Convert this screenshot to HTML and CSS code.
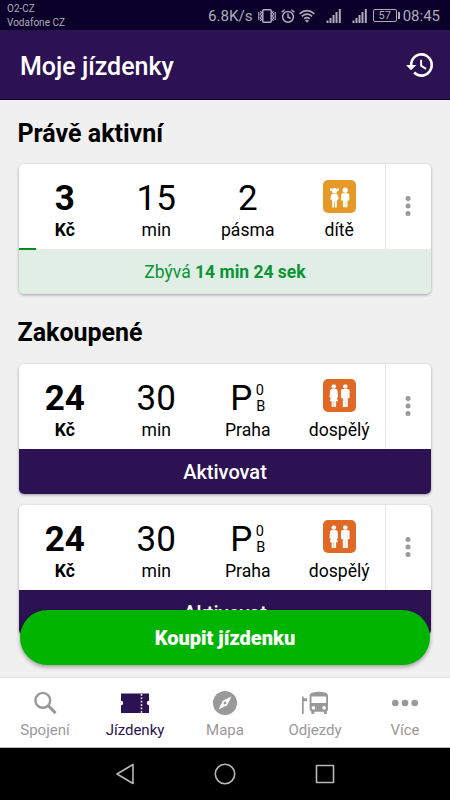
FILE: index.html
```html
<!DOCTYPE html>
<html lang="cs">
<head>
<meta charset="utf-8">
<title>Moje jízdenky</title>
<link rel="stylesheet" href="styles.css">
</head>
<body>
<svg width="0" height="0" class="defs">
  <symbol id="man" viewBox="0 0 9 23">
    <circle cx="4.500" cy="2.300" r="2.300"/>
    <path d="M1.800 4.800h5.400q1.700 0 1.700 1.700v6.700q0 .8-.9.800t-.9-.8V9H7v13.200q0 .8-1.200.8t-1.200-.8V14.500h-.2v7.700q0 .8-1.200.8T2 22.200V9h-.1v4.200q0 .8-.9.800t-.9-.8V6.500Q.1 4.800 1.800 4.800z"/>
  </symbol>
  <symbol id="woman" viewBox="0 0 9 23">
    <circle cx="4.500" cy="2.300" r="2.300"/>
    <path d="M2.300 4.800h4.400q1.200 0 1.500 1.500l.7 6.200q0 .8-.7.900t-.9-.7L6.800 9.500v1l1.800 6.500H6.800v5.200q0 .8-1 .8t-1-.8V17h-.4v5.200q0 .8-1 .8t-1-.8V17H.5l1.800-6.500v-1l-.6 3.200q-.2.800-.9.700t-.7-.9l.7-6.200q.3-1.500 1.500-1.500z"/>
  </symbol>
  <symbol id="adults" viewBox="0 0 33 33">
    <use href="#woman" x="6.300" y="5.200" width="9" height="23"/>
    <use href="#man" x="17.800" y="5.200" width="9" height="23"/>
  </symbol>
  <symbol id="children" viewBox="0 0 33 33">
    <path d="M7 8l3 1.500 1.500-1.200L13 9.500 16 8v3l-2.300-.500H9.300L7 11z"/>
    <circle cx="11.500" cy="10.800" r="2.700"/>
    <path d="M9.500 13.800h4q1.700.5 2.100 5 0 1.200-1 1.200l-.5-1v1.700h-.3v6q0 .9-1 .9t-1-.9v-5.500h-.6v5.500q0 .9-1 .9t-1-.9v-6h-.3V19l-.5 1q-1 0-1-1.200.4-4.500 2.100-5z"/>
    <circle cx="22.200" cy="10.200" r="2.600"/>
    <path d="M19.800 13.200h4.800q1.700 0 1.700 1.600v4.900q0 1-.9 1t-.8-1h-.1v6.900q0 .9-1.100.9t-1.100-.9V21.500H22v5.100q0 .9-1 .9t-1.100-.9v-6.900h-.1q0 1-.8 1t-.9-1v-4.900q0-1.600 1.700-1.600z"/>
  </symbol>
  <symbol id="dots" viewBox="0 0 6 22"><circle cx="3" cy="3.500" r="2.500"/><circle cx="3" cy="11" r="2.500"/><circle cx="3" cy="18.500" r="2.500"/></symbol>
  <symbol id="signal" viewBox="0 0 16 14"><path d="M.5 11.500h2V14h-2zM3.500 9h2v5h-2zM6.500 6h2v8h-2zM9.500 3h2v11h-2zM12.800 0h2v14h-2z"/></symbol>
</svg>

<header class="status">
  <div class="carrier"><div>O2-CZ</div><div>Vodafone CZ</div></div>
  <div class="indicators">
    <span class="speed">6.8K/s</span>
    <svg class="vibrate" viewBox="0 0 18 14" width="18" height="14"><rect x="4.800" y=".8" width="8.400" height="12.400" rx="1" fill="none" stroke="currentColor" stroke-width="1.500"/><path d="M2.500 2l1 1.500-1 1.500 1 2-1 2 1 1.500-1 1.500M.8 3v8M15.500 2l-1 1.500 1 1.500-1 2 1 2-1 1.500 1 1.500M17.200 3v8" fill="none" stroke="currentColor" stroke-width="1.200"/></svg>
    <svg class="alarm" viewBox="0 0 14 14" width="14" height="14"><g fill="none" stroke="currentColor" stroke-width="1.500"><circle cx="7" cy="7.800" r="5.400"/><path d="M.6 3.300L3.600.7M13.400 3.300L10.400.7M7 4.500V8l2.600 1.500"/></g></svg>
    <svg class="wifi" viewBox="0 0 16 14" width="16" height="14"><path d="M.6 4.800q7.400-6.400 14.800 0M2.900 7.400q5.100-4.400 10.200 0M5.200 9.900q2.800-2.400 5.600 0" fill="none" stroke="currentColor" stroke-width="1.600"/><path d="M6 11.500q2-1.500 4 0L8 13.700z" fill="currentColor"/></svg>
    <svg class="sig1" width="16" height="14"><use href="#signal"/></svg>
    <svg class="sig2" width="16" height="14"><use href="#signal"/></svg>
    <span class="battery">57</span>
    <span class="time">08:45</span>
  </div>
</header>

<div class="appbar">
  <h1>Moje jízdenky</h1>
  <svg class="history" viewBox="1 3 21 18" width="27" height="24" preserveAspectRatio="none"><path fill="#fff" d="M13 3a9 9 0 0 0-9 9H1l3.890 3.890.07.140L9 12H6a7 7 0 1 1 2.060 4.940l-1.420 1.420A9 9 0 1 0 13 3zm-1 5v5l4.280 2.540.72-1.210-3.500-2.080V8z"/></svg>
</div>

<main class="content">
  <h2>Právě aktivní</h2>
  <article class="card active">
    <div class="top">
      <div class="cell price"><b>3</b><span>Kč</span></div>
      <div class="cell"><b>15</b><span>min</span></div>
      <div class="cell"><b>2</b><span>pásma</span></div>
      <div class="cell"><svg class="who child" width="33" height="33"><use href="#children"/></svg><span>dítě</span></div>
      <div class="menu"><svg width="6" height="22"><use href="#dots"/></svg></div>
    </div>
    <div class="remaining"><i class="progress"></i>Zbývá <strong>14 min 24 sek</strong></div>
  </article>

  <h2 class="second">Zakoupené</h2>
  <article class="card">
    <div class="top">
      <div class="cell price"><b>24</b><span>Kč</span></div>
      <div class="cell"><b>30</b><span>min</span></div>
      <div class="cell"><div class="zone"><b>P</b><small><i>0</i><i>B</i></small></div><span>Praha</span></div>
      <div class="cell"><svg class="who" width="33" height="33"><use href="#adults"/></svg><span>dospělý</span></div>
      <div class="menu"><svg width="6" height="22"><use href="#dots"/></svg></div>
    </div>
    <div class="activate">Aktivovat</div>
  </article>
  <article class="card third">
    <div class="top">
      <div class="cell price"><b>24</b><span>Kč</span></div>
      <div class="cell"><b>30</b><span>min</span></div>
      <div class="cell"><div class="zone"><b>P</b><small><i>0</i><i>B</i></small></div><span>Praha</span></div>
      <div class="cell"><svg class="who" width="33" height="33"><use href="#adults"/></svg><span>dospělý</span></div>
      <div class="menu"><svg width="6" height="22"><use href="#dots"/></svg></div>
    </div>
    <div class="activate">Aktivovat</div>
  </article>
  <div class="buy">Koupit jízdenku</div>
</main>

<nav class="tabs">
  <div class="tab"><svg width="24" height="24" viewBox="0 0 24 24"><circle cx="9.800" cy="9.300" r="7.400" fill="none" stroke="currentColor" stroke-width="2.400"/><path d="M15.300 14.800l7.300 7.300" stroke="currentColor" stroke-width="3"/></svg><span>Spojení</span></div>
  <div class="tab on"><svg width="30" height="24" viewBox="0 0 30 24"><path fill="currentColor" d="M1 2.500h28v7.300a2.200 2.200 0 0 0 0 4.400v7.800H1v-7.800a2.200 2.200 0 0 0 0-4.400z"/><path d="M21.500 3v19" stroke="#fff" stroke-width="1.500" stroke-dasharray="1.700 1.700"/></svg><span>Jízdenky</span></div>
  <div class="tab"><svg width="24" height="24" viewBox="0 0 24 24"><circle cx="12" cy="12" r="12" fill="currentColor"/><path fill="#fff" d="M18.500 5.500l-4.300 8.700-8.700 4.300 4.300-8.700z"/><circle cx="12" cy="12" r="1.400" fill="currentColor"/></svg><span>Mapa</span></div>
  <div class="tab"><svg class="bus" width="28" height="24" viewBox="0 0 28 24"><path fill="currentColor" fill-rule="evenodd" d="M1 5.500h1.700v1.800H6v3H2.700V23H1zM12 1.500q6-1.500 12 0 3 .6 3 3.500v13q0 1.700-1.200 2.500V23h-2.900v-2.200h-9.600V23h-2.900v-2.500Q8.600 19.800 8.600 18V5q0-2.900 3.400-3.500zM10.500 5.500v6.500h14.600V5.500zM12.500 15a1.800 1.800 0 1 0 .01 0zM23.100 15a1.800 1.800 0 1 0 .01 0z"/></svg><span>Odjezdy</span></div>
  <div class="tab"><svg width="28" height="24" viewBox="0 0 28 24"><g fill="currentColor"><circle cx="4.300" cy="12" r="3.300"/><circle cx="14" cy="12" r="3.300"/><circle cx="23.700" cy="12" r="3.300"/></g></svg><span>Více</span></div>
</nav>

<footer class="system">
  <svg width="20" height="22" viewBox="0 0 20 22"><path d="M18 1.500v19L2 11z"/></svg>
  <svg width="22" height="22" viewBox="0 0 22 22"><circle cx="11" cy="11" r="9.700"/></svg>
  <svg width="20" height="20" viewBox="0 0 20 20"><path d="M1.500 1.500h17v17h-17z"/></svg>
</footer>
</body>
</html>
```

FILE: styles.css
```css
* { box-sizing: border-box; }
body { margin: 0; width: 450px; height: 800px; overflow: hidden; display: flex; flex-direction: column; background: #f0f0f0; font-family: Roboto, "Liberation Sans", sans-serif; color: #000; }
.defs { position: absolute; }
svg { display: block; flex: none; }
h1, h2 { margin: 0; white-space: nowrap; }
i { font-style: normal; }

.status { height: 30px; flex: none; background: #0b0029; color: #b0acb8; display: flex; justify-content: space-between; padding: 0 10px 0 7px; }
.carrier { font-size: 10px; line-height: 13.500px; padding-top: 2px; }
.indicators { display: flex; align-items: center; padding-top: 1px; }
.speed { font-size: 15.200px; margin-right: 5px; }
.alarm { margin-left: 5px; }
.wifi { margin-left: 4px; }
.sig1 { margin-left: 11px; fill: currentColor; }
.sig2 { margin-left: 10px; fill: currentColor; }
.battery { width: 24px; height: 13px; border: 1px solid currentColor; border-radius: 2px; font-size: 11px; line-height: 11px; text-align: center; margin-left: 5px; position: relative; }
.battery::after { content: ""; position: absolute; right: -4px; top: 2px; width: 2px; height: 7px; background: currentColor; }
.time { font-size: 15px; margin-left: 6px; }

.appbar { height: 70px; flex: none; background: #2c1252; border-bottom: 1px solid #0b0029; display: flex; align-items: center; justify-content: space-between; padding: 0 17px 0 20px; }
h1 { color: #fff; font-size: 25px; font-weight: 500; line-height: 30px; padding-top: 5px; }
.history { margin-top: 1px; }

.content { height: 577px; flex: none; padding: 19px 19px 0; overflow: hidden; position: relative; }
h2 { font-size: 25px; font-weight: 700; line-height: 30px; margin: 0 0 15px -1.500px; }
h2.second { margin-top: 24px; margin-bottom: 16px; }
.card { height: 130px; border-radius: 5px; background: #fff; overflow: hidden; box-shadow: 0 1px 3px rgba(0,0,0,.35); }
.third { margin-top: 11px; }
.top { height: 85px; display: flex; }
.cell { flex: 1; display: flex; flex-direction: column; align-items: center; padding-top: 14px; font-size: 17.600px; }
.cell b { font-size: 35px; line-height: 41px; font-weight: 400; }
.cell span { line-height: 22px; margin-top: 0; }
.price b, .price span { font-weight: 700; }
.who { margin: 2px 0 6px; border-radius: 5px; background: #e06a25; fill: #fff; }
.card:not(.active) .who { margin: 1px 0 7px; }
.child { background: #e59a27; }
.zone { display: flex; height: 41px; }
.zone small { display: flex; flex-direction: column; font-size: 14.500px; line-height: 15.500px; padding: 5px 0 0 4px; }
.zone i:first-child { margin-left: -.5px; }
.menu { width: 46px; border-left: 1px solid #e8e8e8; display: flex; align-items: center; justify-content: center; padding: 0 1px 1px 0; }
.menu svg { fill: #999; }
.remaining { height: 45px; background: #e1eee5; color: #0a9435; font-size: 17.500px; line-height: 46px; text-align: center; position: relative; }
.remaining strong { font-weight: 700; }
.progress { position: absolute; left: 0; top: -1px; width: 17px; height: 2px; background: #008c1e; }
.activate { height: 45px; background: #2c1252; color: #fff; text-align: center; font-size: 20px; font-weight: 500; line-height: 46px; }
.buy { position: absolute; left: 20px; top: 510px; width: 410px; height: 55px; border-radius: 28px; background: #00b400; color: #fff; font-size: 20px; font-weight: 900; line-height: 56px; text-align: center; box-shadow: 0 2px 4px rgba(0,0,0,.35); }

.tabs { height: 71px; flex: none; background: #fff; display: grid; grid-template-columns: repeat(5, 1fr); border-top: 1px solid #e6e6e6; border-bottom: 1px solid #bbb; color: #999; position: relative; }
.tab { display: flex; flex-direction: column; align-items: center; padding-top: 13px; font-size: 15px; line-height: 20px; }
.tab span { margin-top: 5px; }
.on { color: #2c1252; }
.system { height: 52px; flex: none; background: #000; display: flex; align-items: center; justify-content: center; gap: 79px; }
.system svg { fill: none; stroke: #b8b8b8; stroke-width: 1.600; stroke-linejoin: round; }
```
